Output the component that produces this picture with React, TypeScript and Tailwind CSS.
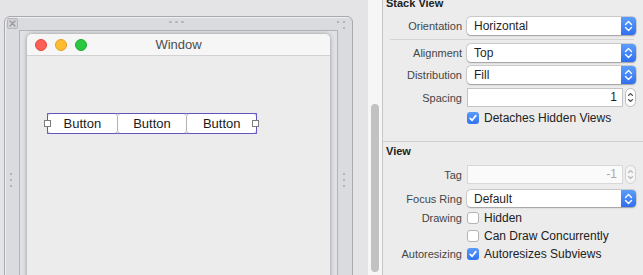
import React from "react";

const Chev = () => (
  <svg width="15" height="18" viewBox="0 0 15 18" fill="none" stroke="white" strokeWidth="1.4" strokeLinecap="round" strokeLinejoin="round">
    <path d="M4.5 7.5L7.5 4.5L10.5 7.5" />
    <path d="M4.5 10.5L7.5 13.5L10.5 10.5" />
  </svg>
);

function Popup({ value }: { value: string }) {
  return (
    <div className="w-full h-full flex rounded-[4px] bg-white shadow-[0_0_0_0.5px_rgba(0,0,0,0.2),0_0.5px_1.5px_rgba(0,0,0,0.25)]">
      <div className="flex-1 pl-[7px] text-[12px] leading-[18px] text-[#1f1f1f]">{value}</div>
      <div className="w-[15px] h-full rounded-r-[4px] bg-gradient-to-b from-[#5c9dfb] to-[#2f6ff0] flex items-center justify-center">
        <Chev />
      </div>
    </div>
  );
}

function Stepper({ disabled }: { disabled?: boolean }) {
  return (
    <div className={disabled ? "w-[11px] h-[19px] rounded-full border border-[#d2d2d2] bg-[#f4f4f4] flex items-center justify-center" : "w-[11px] h-[19px] rounded-full border border-[#bdbdbd] bg-white flex items-center justify-center"}>
      <svg width="9" height="17" viewBox="0 0 9 17" fill="none" stroke={disabled ? "#b8b8b8" : "#555"} strokeWidth="1.1" strokeLinecap="round" strokeLinejoin="round">
        <path d="M2.5 6.5L4.5 4.5L6.5 6.5" />
        <path d="M2.5 10.5L4.5 12.5L6.5 10.5" />
      </svg>
    </div>
  );
}

function NumField({ value, disabled }: { value: string; disabled?: boolean }) {
  return (
    <div className="flex items-center gap-[2px] h-full">
      <div
        className={
          disabled
            ? "w-[156px] h-full bg-[#fafafa] border border-[#d8d8d8] text-right pr-[5px] text-[12px] leading-[17px] text-[#ababab]"
            : "w-[156px] h-full bg-white border border-[#c4c4c4] text-right pr-[5px] text-[12px] leading-[17px] text-[#1e1e1e]"
        }
      >
        {value}
      </div>
      <Stepper disabled={disabled} />
    </div>
  );
}

function Check({ checked, label }: { checked?: boolean; label: string }) {
  return (
    <div className="flex items-center gap-[5px]">
      {checked ? (
        <div className="w-[12px] h-[12px] rounded-[3px] bg-gradient-to-b from-[#5b9bfa] to-[#3173f3] flex items-center justify-center">
          <svg width="12" height="12" viewBox="0 0 12 12" fill="none" stroke="white" strokeWidth="1.7" strokeLinecap="round" strokeLinejoin="round">
            <path d="M3.2 6.4L5.1 8.3L8.8 3.6" />
          </svg>
        </div>
      ) : (
        <div className="w-[12px] h-[12px] rounded-[3px] bg-white border border-[#b4b4b4]" />
      )}
      <span className="text-[12px] leading-[14px] text-[#222]">{label}</span>
    </div>
  );
}

function Row({ label, className, children }: { label: string; className: string; children: React.ReactNode }) {
  return (
    <div className={className}>
      <div className="w-[79px] shrink-0 text-right text-[11px] leading-[14px] text-[#464646] whitespace-nowrap">{label}</div>
      <div className="ml-[5px] flex-1 h-full flex items-center">{children}</div>
    </div>
  );
}

const Dot = ({ cls }: { cls: string }) => <div className={cls} />;

export default function App() {
  return (
    <div className="w-[643px] h-[275px] flex overflow-hidden bg-[#e4e4e7] font-['Liberation_Sans',Arial,sans-serif]">
      {/* Canvas */}
      <div className="w-[368px] h-full shrink-0 bg-[#e4e4e7] overflow-hidden">
        <div className="relative ml-[4px] mt-[16px] w-[349px] h-[300px] border border-[#a9a9ac] rounded-t-[6px] bg-[#dadbde] shadow-[inset_1px_1px_0_rgba(255,255,255,0.55)] px-[14px] pt-[13px]">
          {/* close box */}
          <div className="absolute left-[2px] top-[1px] w-[11px] h-[11px] rounded-[2px] border border-[#b6b6ba] bg-[#d2d3d6] flex items-center justify-center">
            <svg width="7" height="7" viewBox="0 0 7 7" stroke="#9a9a9e" strokeWidth="1.3" strokeLinecap="round">
              <path d="M1 1L6 6M6 1L1 6" />
            </svg>
          </div>
          {/* top center dots */}
          <Dot cls="absolute left-[164px] top-[4px] w-[3px] h-[2px] rounded-full bg-[#b3b3b7]" />
          <Dot cls="absolute left-[170px] top-[4px] w-[3px] h-[2px] rounded-full bg-[#b3b3b7]" />
          <Dot cls="absolute left-[176px] top-[4px] w-[3px] h-[2px] rounded-full bg-[#b3b3b7]" />
          {/* top right dots */}
          <Dot cls="absolute left-[332px] top-[4px] w-[2px] h-[2px] rounded-full bg-[#a6a6aa]" />
          <Dot cls="absolute left-[338px] top-[4px] w-[2px] h-[2px] rounded-full bg-[#a6a6aa]" />
          <Dot cls="absolute left-[338px] top-[10px] w-[2px] h-[2px] rounded-full bg-[#a6a6aa]" />
          {/* side dots */}
          <Dot cls="absolute left-[5px] top-[156px] w-[2px] h-[2px] rounded-full bg-[#a6a6aa]" />
          <Dot cls="absolute left-[5px] top-[162px] w-[2px] h-[2px] rounded-full bg-[#a6a6aa]" />
          <Dot cls="absolute left-[5px] top-[168px] w-[2px] h-[2px] rounded-full bg-[#a6a6aa]" />
          <Dot cls="absolute left-[338px] top-[156px] w-[2px] h-[2px] rounded-full bg-[#a6a6aa]" />
          <Dot cls="absolute left-[338px] top-[162px] w-[2px] h-[2px] rounded-full bg-[#a6a6aa]" />
          <Dot cls="absolute left-[338px] top-[168px] w-[2px] h-[2px] rounded-full bg-[#a6a6aa]" />

          {/* inner frame */}
          <div className="h-full border border-[#b4b4b8] bg-[#e0e1e4] px-[7px] pt-[3px]">
            {/* window */}
            <div className="h-full rounded-t-[5px] bg-[#ececec] shadow-[0_0_4px_rgba(0,0,0,0.35)] flex flex-col overflow-hidden">
              <div className="relative h-[22px] shrink-0 bg-[#f6f6f6] border-b border-[#d2d2d2] flex items-center justify-center">
                <div className="absolute left-[8px] top-[5px] flex gap-[8px]">
                  <div className="w-[12px] h-[12px] rounded-full bg-[#fe5f57] border border-[#e2463f]" />
                  <div className="w-[12px] h-[12px] rounded-full bg-[#febc2e] border border-[#dfa023]" />
                  <div className="w-[12px] h-[12px] rounded-full bg-[#2ac840] border border-[#1eab31]" />
                </div>
                <span className="text-[13px] leading-[16px] text-[#4d4d4d]">Window</span>
              </div>
              <div className="pt-[57px] pl-[20px]">
                <div className="relative w-[210px] h-[21px] border border-[#6d62d4] flex gap-[1px]">
                  <div className="flex-1 bg-white rounded-[3px] shadow-[0_0_0_0.5px_rgba(0,0,0,0.25)] flex items-center justify-center text-[13px] text-[#1b1b1b]">Button</div>
                  <div className="flex-1 bg-white rounded-[3px] shadow-[0_0_0_0.5px_rgba(0,0,0,0.25)] flex items-center justify-center text-[13px] text-[#1b1b1b]">Button</div>
                  <div className="flex-1 bg-white rounded-[3px] shadow-[0_0_0_0.5px_rgba(0,0,0,0.25)] flex items-center justify-center text-[13px] text-[#1b1b1b]">Button</div>
                  <div className="absolute left-[-4px] top-[6px] w-[7px] h-[7px] bg-white border border-[#7c7c7c]" />
                  <div className="absolute right-[-3px] top-[6px] w-[7px] h-[7px] bg-white border border-[#7c7c7c]" />
                </div>
              </div>
            </div>
          </div>
        </div>
      </div>

      {/* scroll track */}
      <div className="w-[14px] h-full shrink-0 bg-[#f6f6f6] pt-[104px] pl-[3px]">
        <div className="w-[8px] h-[168px] rounded-full bg-[#c2c2c2]" />
      </div>

      {/* inspector */}
      <div className="w-[261px] h-full shrink-0 bg-[#ececec] border-l border-[#c5c5c5] flex flex-col pr-[7px] overflow-hidden">
        <div className="-mt-[4px] pl-[3px] h-[14px] text-[11px] leading-[14px] font-bold text-[#222]">Stack View</div>
        <Row className="mt-[7px] h-[18px] flex items-center" label="Orientation"><Popup value="Horizontal" /></Row>
        <div className="mt-[4px] ml-[7px] mr-[2px] h-px bg-[#d4d4d4]" />
        <Row className="mt-[4px] h-[18px] flex items-center" label="Alignment"><Popup value="Top" /></Row>
        <Row className="mt-[4px] h-[18px] flex items-center" label="Distribution"><Popup value="Fill" /></Row>
        <Row className="mt-[4px] h-[19px] flex items-center" label="Spacing"><NumField value="1" /></Row>
        <Row className="mt-[5px] h-[12px] flex items-center" label=""><Check checked label="Detaches Hidden Views" /></Row>
        <div className="mt-[17px] -mr-[7px] h-px bg-[#d0d0d0]" />
        <div className="mt-[2px] pl-[3px] h-[14px] text-[11px] leading-[14px] font-bold text-[#222]">View</div>
        <Row className="mt-[7px] h-[19px] flex items-center" label="Tag"><NumField value="-1" disabled /></Row>
        <Row className="mt-[6px] h-[17px] flex items-center" label="Focus Ring"><Popup value="Default" /></Row>
        <Row className="mt-[5px] h-[12px] flex items-center" label="Drawing"><Check label="Hidden" /></Row>
        <Row className="mt-[6px] h-[12px] flex items-center" label=""><Check label="Can Draw Concurrently" /></Row>
        <Row className="mt-[6px] h-[12px] flex items-center" label="Autoresizing"><Check checked label="Autoresizes Subviews" /></Row>
      </div>
    </div>
  );
}
